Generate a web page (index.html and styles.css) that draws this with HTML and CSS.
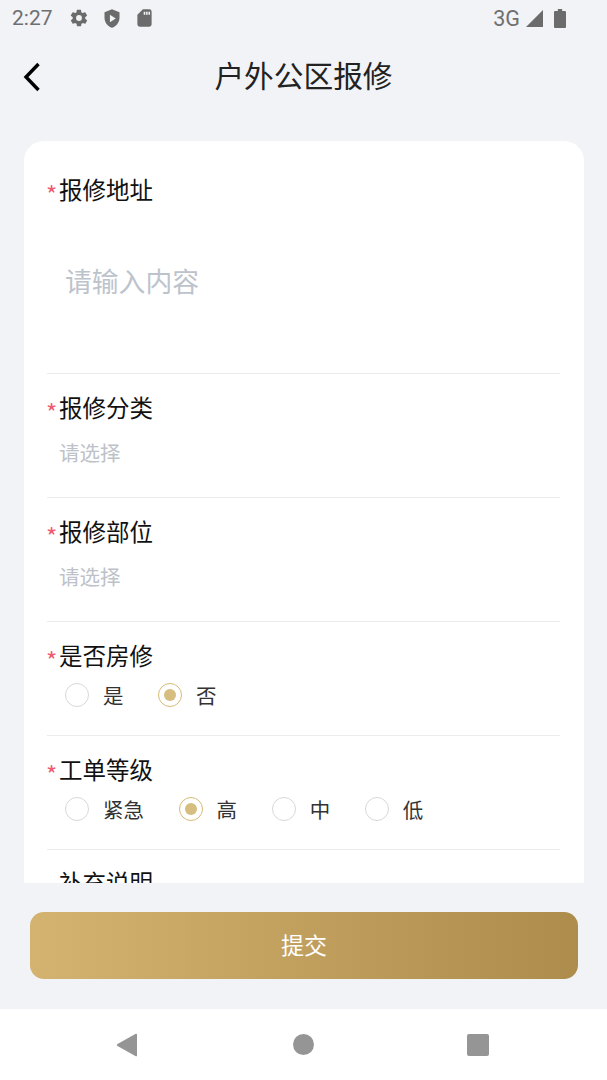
FILE: index.html
```html
<!DOCTYPE html>
<html lang="zh-CN">
<head>
<meta charset="utf-8">
<title>户外公区报修</title>
<link rel="stylesheet" href="styles.css">
</head>
<body>
<div class="page">
  <div class="status">
    <span class="time">2:27</span>
    <svg class="si gear" viewBox="0 0 24 24"><path d="M19.400 13c.1-.3.1-.7.1-1s0-.7-.1-1l2.100-1.600c.2-.2.2-.4.1-.6l-2-3.500c-.1-.2-.4-.3-.6-.2l-2.500 1c-.5-.4-1.100-.7-1.700-1L14.400 2.400c0-.2-.2-.4-.5-.4h-4c-.3 0-.5.200-.5.400L9 5.100c-.6.300-1.200.6-1.700 1l-2.500-1c-.2-.1-.5 0-.6.2l-2 3.500c-.1.200-.1.400.1.600L4.500 11c0 .3-.1.700-.1 1s0 .7.100 1l-2.100 1.600c-.2.200-.2.400-.1.600l2 3.500c.1.200.4.300.6.200l2.500-1c.5.400 1.100.7 1.700 1l.4 2.700c0 .2.200.4.500.4h4c.3 0 .5-.2.500-.4l.4-2.700c.6-.3 1.200-.6 1.700-1l2.500 1c.2.100.5 0 .6-.2l2-3.500c.1-.2.100-.4-.1-.6zM12 15.500a3.500 3.500 0 1 1 0-7 3.500 3.500 0 0 1 0 7z"/></svg>
    <svg class="si shield" viewBox="0 0 24 24"><path fill-rule="evenodd" d="M12 1 3 4.500v6.500c0 5.500 3.800 10.500 9 12 5.200-1.500 9-6.500 9-12V4.500zM9.500 7.500v9l7-4.500z"/></svg>
    <svg class="si card-ic" viewBox="0 0 24 24"><path fill-rule="evenodd" d="M10 1h8a3 3 0 0 1 3 3v16a3 3 0 0 1-3 3H6a3 3 0 0 1-3-3V8zM11 4v4h2V4zM14 4v4h2V4zM17 4v4h2V4z"/></svg>
    <span class="grow"></span>
    <span class="net">3G</span>
    <svg class="signal" viewBox="0 0 18 18"><path d="M18 0v18H0z"/></svg>
    <svg class="battery" viewBox="0 0 11 19" preserveAspectRatio="none"><path d="M3.500 0h4v2H10a1 1 0 0 1 1 1v15a1 1 0 0 1-1 1H1a1 1 0 0 1-1-1V3a1 1 0 0 1 1-1h2.500z"/></svg>
  </div>

  <header class="nav">
    <svg class="back" viewBox="0 0 20 30"><path d="M16.500 2 4 15l12.500 13"/></svg>
    <h1 class="title">户外公区报修</h1>
  </header>

  <main class="card">
    <section class="field field-address">
      <div class="label"><span class="star">*</span>报修地址</div>
      <div class="textarea">请输入内容</div>
    </section>
    <section class="field field-select">
      <div class="label"><span class="star">*</span>报修分类</div>
      <div class="select">请选择</div>
    </section>
    <section class="field field-select">
      <div class="label"><span class="star">*</span>报修部位</div>
      <div class="select">请选择</div>
    </section>
    <section class="field field-radio">
      <div class="label"><span class="star">*</span>是否房修</div>
      <div class="radios">
        <div class="radio"><span class="dot"></span>是</div>
        <div class="radio on"><span class="dot"></span>否</div>
      </div>
    </section>
    <section class="field field-radio">
      <div class="label"><span class="star">*</span>工单等级</div>
      <div class="radios">
        <div class="radio"><span class="dot"></span>紧急</div>
        <div class="radio on"><span class="dot"></span>高</div>
        <div class="radio"><span class="dot"></span>中</div>
        <div class="radio"><span class="dot"></span>低</div>
      </div>
    </section>
    <section class="field last">
      <div class="label label-plain">补充说明</div>
    </section>
  </main>

  <div class="footer">
    <button class="submit" type="button">提交</button>
  </div>

  <nav class="sysnav">
    <svg class="nv-back" viewBox="0 0 22 26" preserveAspectRatio="none"><path d="M21 1.500v23c0 .8-.6 1-1.200.7L1.500 14c-.9-.5-.9-1.500 0-2L19.800.8c.6-.3 1.200 0 1.200.7z"/></svg>
    <span class="nv-home"></span>
    <span class="nv-square"></span>
  </nav>
</div>
</body>
</html>
```

FILE: styles.css
```css
* { box-sizing: border-box; }
html, body { margin: 0; padding: 0; }
body {
  font-family: "Noto Sans CJK SC", "Noto Sans", sans-serif;
  background: #f1f3f7;
}
.page {
  width: 607px;
  height: 1080px;
  display: flex;
  flex-direction: column;
  overflow: hidden;
  background: #f1f3f7;
}

/* status bar */
.status {
  height: 36px;
  flex: none;
  display: flex;
  align-items: center;
  padding: 0 41px 0 12px;
  color: #6f6f6f;
}
.time { font-family: Roboto, sans-serif; font-size: 21px; width: 57px; flex: none; }
.si { fill: #6b6b6b; width: 20px; height: 20px; flex: none; }
.shield { margin-left: 13px; width: 20px; height: 21px; }
.card-ic { margin-left: 13px; width: 19px; height: 20px; }
.grow { flex: 1; }
.net { font-family: Roboto, sans-serif; font-size: 21.500px; }
.signal { fill: #6b6b6b; width: 17px; height: 17px; margin: 0 0 0 6px; }
.battery { fill: #6b6b6b; width: 12px; height: 19px; margin-left: 11px; }

/* header */
.nav {
  height: 82px;
  flex: none;
  display: flex;
  align-items: center;
  justify-content: center;
  position: relative;
  padding-bottom: 4px;
}
.back {
  position: absolute;
  left: 22px;
  top: 26px;
  width: 20px;
  height: 30px;
  fill: none;
  stroke: #000;
  stroke-width: 3.400;
}
.title {
  margin: 0;
  font-size: 29.700px;
  font-weight: 400;
  line-height: 40px;
  color: #222;
}

/* card */
.card {
  margin: 23px 23px 0 24px;
  height: 742px;
  flex: none;
  background: #fff;
  border-radius: 20px 20px 0 0;
  padding: 0 24px 0 23px;
  overflow: hidden;
}
.field { border-bottom: 1px solid #ececec; }
.field-address { height: 233px; padding-top: 31px; }
.field-select { height: 124px; padding-top: 16px; }
.field-radio { padding-top: 16px; height: 114px; }
.field-radio:last-of-type { height: 115px; padding-top: 18px; }
.last { border-bottom: 0; padding-top: 15px; }

.label {
  font-size: 23.500px;
  line-height: 34px;
  color: #111;
  display: flex;
  align-items: center;
}
.label-plain { padding-left: 12px; }
.star {
  width: 12px;
  flex: none;
  color: #ee5a70;
  font-size: 24px;
  line-height: 34px;
  position: relative;
  top: 5px;
  left: -1px;
}
.textarea {
  padding: 55px 0 0 18px;
  font-size: 26.800px;
  line-height: 40px;
  color: #bdc3cc;
}
.select {
  padding: 13px 0 0 12px;
  font-size: 20.500px;
  line-height: 30px;
  color: #bdc1c8;
}
.radios {
  display: flex;
  gap: 34.600px;
  padding: 8px 0 0 18px;
}
.radio {
  display: flex;
  align-items: center;
  gap: 14px;
  font-size: 20.500px;
  line-height: 30px;
  color: #333;
}
.field-radio:last-of-type .radios { padding-top: 7px; }
.dot {
  width: 24px;
  height: 24px;
  flex: none;
  border-radius: 50%;
  border: 1.500px solid #d8d8d8;
  background: #fff;
  display: flex;
  align-items: center;
  justify-content: center;
}
.radio.on .dot { border-color: #d6bb76; }
.radio.on .dot::after {
  content: "";
  width: 12px;
  height: 12px;
  border-radius: 50%;
  background: #d6bd80;
}

/* footer */
.footer {
  flex: 1;
  padding: 29px 29px 0 30px;
}
.submit {
  display: block;
  width: 100%;
  height: 67px;
  border: 0;
  border-radius: 14px;
  background: linear-gradient(90deg, #d4b26f, #ad8c4c);
  color: #fff;
  font-family: inherit;
  font-size: 23px;
  padding: 0 0 4px;
}

/* system nav */
.sysnav {
  height: 71px;
  flex: none;
  background: #fff;
  display: flex;
  align-items: center;
  padding: 0 118px 0 116px;
  justify-content: space-between;
}
.nv-back { width: 22px; height: 24px; fill: #959595; }
.nv-home { width: 21px; height: 21px; border-radius: 50%; background: #959595; margin-left: 1px; }
.nv-square { width: 22px; height: 22px; border-radius: 2px; background: #959595; }
```
